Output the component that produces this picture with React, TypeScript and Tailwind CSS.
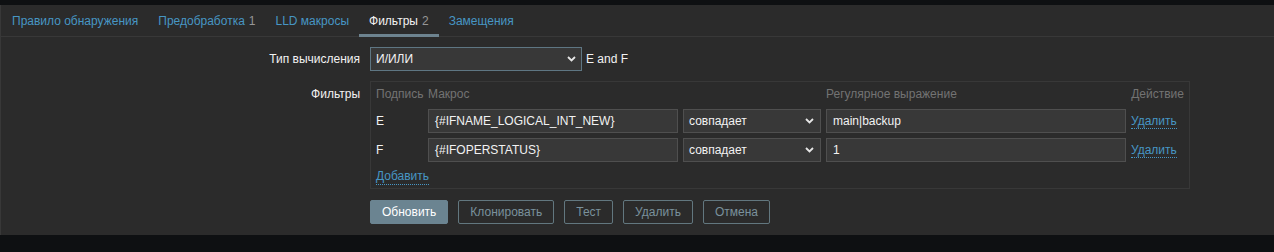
import React from "react";

const Chevron = () => (
  <svg width="9" height="6" viewBox="0 0 9 6" className="shrink-0">
    <path d="M1 1l3.5 3.5L8 1" fill="none" stroke="#e6e6e6" strokeWidth="1.8" />
  </svg>
);

const tabs = [
  { label: "Правило обнаружения" },
  { label: "Предобработка", count: "1" },
  { label: "LLD макросы" },
  { label: "Фильтры", count: "2", active: true },
  { label: "Замещения" },
];

const rows = [
  { id: "E", macro: "{#IFNAME_LOGICAL_INT_NEW}", value: "main|backup" },
  { id: "F", macro: "{#IFOPERSTATUS}", value: "1" },
];

export default function App() {
  return (
    <div
      className="h-[252px] bg-[#0e1012] pt-[5px] text-[12px] text-[#f2f2f2]"
      style={{ fontFamily: '"Liberation Sans", Arial, sans-serif' }}
    >
      <div className="h-[230px] bg-[#2b2b2b] border-l border-[#383838]">
        {/* tabs */}
        <div className="flex h-[32px] border-b border-[#383838] pl-px">
          {tabs.map((t) => (
            <div
              key={t.label}
              className={
                "flex items-center h-[32px] -mb-px px-[10px] pt-[3px] border-b-[3px] " +
                (t.active
                  ? "border-[#6d838f] text-[#f2f2f2]"
                  : "border-transparent text-[#4796c4]")
              }
            >
              {t.label}
              {t.count && <span className="ml-[4px] text-[#969696]">{t.count}</span>}
            </div>
          ))}
        </div>

        {/* form */}
        <div className="grid grid-cols-[359px_1fr] gap-x-[10px] pt-[10px]">
          <div className="flex items-center justify-end h-[24px]">Тип вычисления</div>
          <div className="flex items-center h-[24px]">
            <div className="flex items-center justify-between w-[212px] h-[24px] bg-[#383838] border border-[#5e7683] pl-[5px] pr-[5px]">
              <span>И/ИЛИ</span>
              <Chevron />
            </div>
            <span className="ml-[4px]">E and F</span>
          </div>

          <div className="flex justify-end pt-[6px] leading-[14px] mt-[10px]">Фильтры</div>
          <div className="mt-[10px]">
            <div className="w-[820px] border border-[#383838] px-[5px]">
              <div className="flex gap-[5px] h-[23px] items-center text-[#737373]">
                <div className="w-[47px]">Подпись</div>
                <div className="w-[250px]">Макрос</div>
                <div className="w-[138px]"></div>
                <div className="w-[300px]">Регулярное выражение</div>
                <div className="flex-1 text-right">Действие</div>
              </div>
              <div className="flex flex-col gap-[5px] mt-[4px]">
                {rows.map((r) => (
                  <div key={r.id} className="flex gap-[5px] h-[24px] items-center">
                    <div className="w-[47px]">{r.id}</div>
                    <div className="w-[250px] h-[24px] flex items-center bg-[#383838] border border-[#4f4f4f] px-[6px]">
                      {r.macro}
                    </div>
                    <div className="w-[138px] h-[24px] flex items-center justify-between bg-[#383838] border border-[#4f4f4f] pl-[5px] pr-[6px]">
                      <span>совпадает</span>
                      <Chevron />
                    </div>
                    <div className="w-[300px] h-[24px] flex items-center bg-[#383838] border border-[#4f4f4f] px-[6px]">
                      {r.value}
                    </div>
                    <div className="flex-1">
                      <span className="text-[#4796c4] border-b border-dotted border-[#4796c4] leading-[14px]">
                        Удалить
                      </span>
                    </div>
                  </div>
                ))}
              </div>
              <div className="mt-[5px] mb-[5px] h-[16px]">
                <span className="inline-block text-[#4796c4] border-b border-dotted border-[#4796c4] leading-[15px]">
                  Добавить
                </span>
              </div>
            </div>
          </div>

          <div className="mt-[11px]"></div>
          <div className="flex gap-[10px] mt-[11px]">
            <button className="h-[24px] px-[11px] bg-[#6b8491] border border-[#6b8491] rounded-[2px] text-white">
              Обновить
            </button>
            {["Клонировать", "Тест", "Удалить", "Отмена"].map((b) => (
              <button
                key={b}
                className="h-[24px] px-[11px] border border-[#62777f] rounded-[2px] text-[#7a919c]"
              >
                {b}
              </button>
            ))}
          </div>
        </div>
      </div>
    </div>
  );
}
